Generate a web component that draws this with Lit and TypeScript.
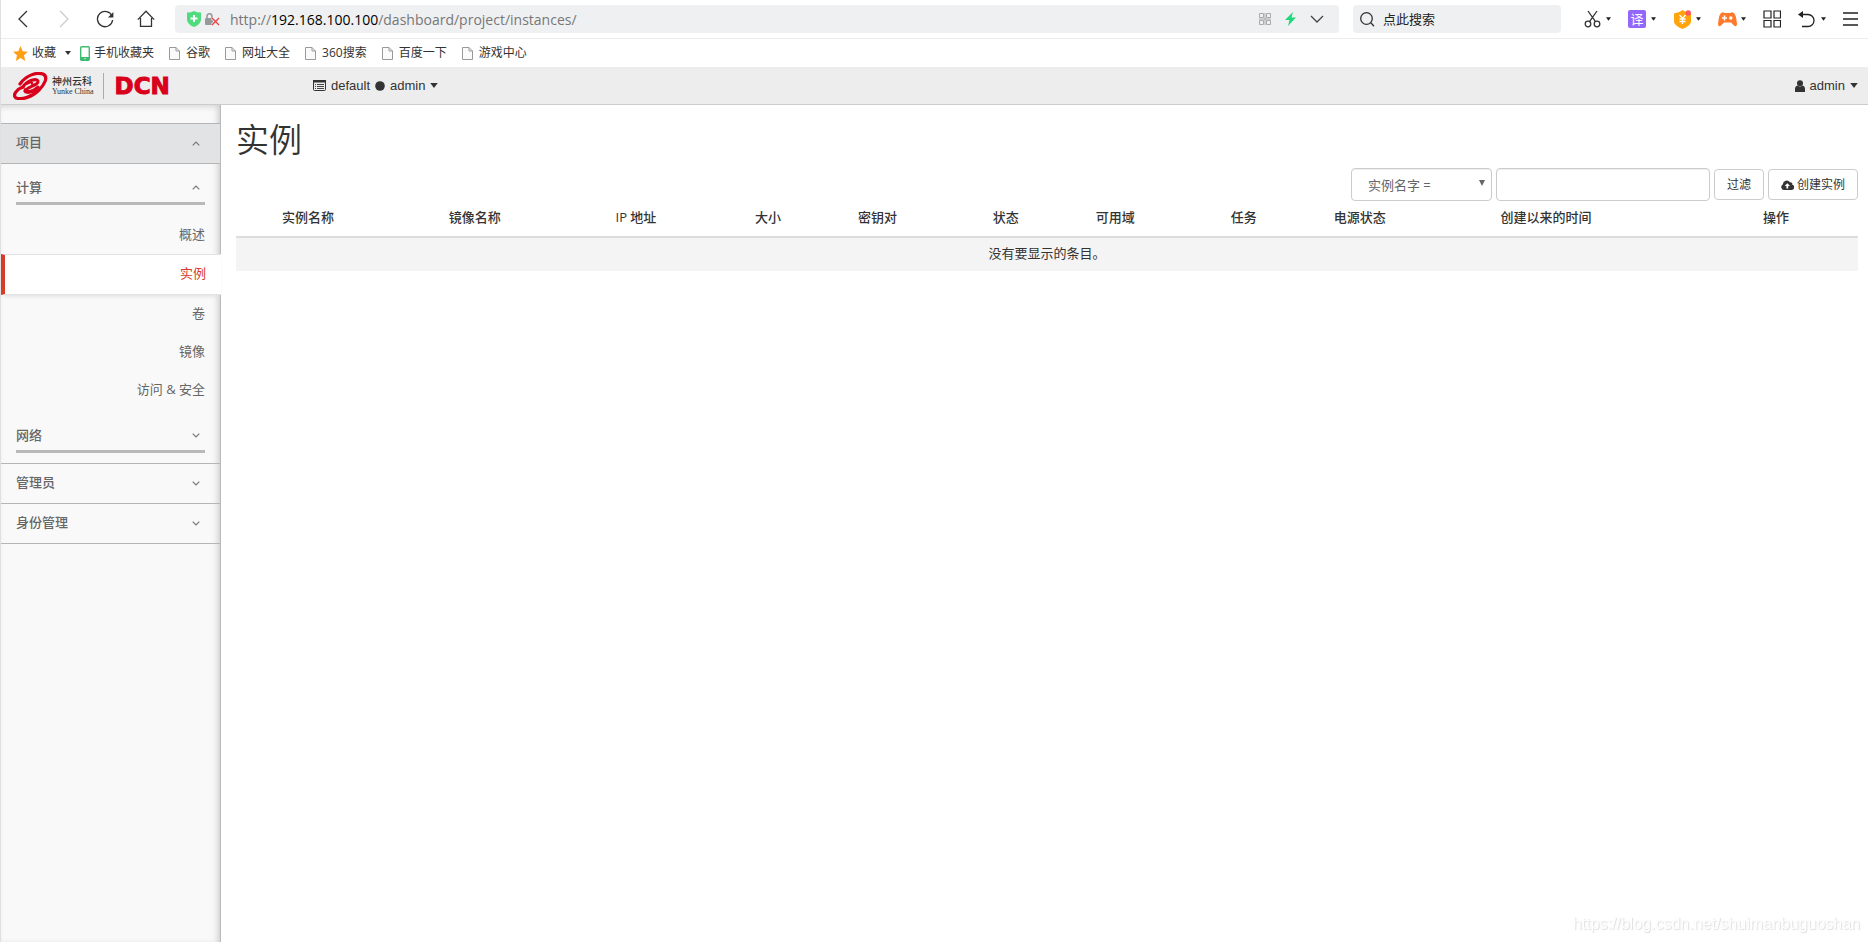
import { LitElement, html, css, svg, nothing } from "lit";
import { customElement, property } from "lit/decorators.js";

const icon = (w: number, h: number, body: unknown, box = `0 0 ${w} ${h}`) =>
  html`<svg class="icon" width=${w} height=${h} viewBox=${box} fill="none" aria-hidden="true">${body}</svg>`;

const caret = (w = 6, h = 4) => icon(w, h, svg`<path d="M0 0H6L3 4Z" fill="currentColor"/>`, "0 0 6 4");

const glyphs = {
  back: icon(18, 18, svg`<path d="M13 1L5 9L13 17" stroke="#333" stroke-width="1.3"/>`),
  forward: icon(18, 18, svg`<path d="M5 1L13 9L5 17" stroke="#ccc" stroke-width="1.3"/>`),
  reload: icon(18, 18, svg`<path d="M16 6A7.6 7.6 0 1 0 16.6 10" stroke="#333" stroke-width="1.3"/><path d="M17.4 2V7.4H12Z" fill="#333"/>`),
  home: icon(18, 18, svg`<path d="M.8 9.6L9 1.2L17.2 9.6M3.5 8V16.4H14.5V8" stroke="#333" stroke-width="1.3"/>`),
  shield: icon(14, 16, svg`<path d="M0 1.5Q4 1.6 7 0Q10 1.6 14 1.5V9Q13.4 13.5 7 16Q.6 13.5 0 9Z" fill="#4fdc7c"/><path d="M7 4V11M3.5 7.5H10.5" stroke="#fff" stroke-width="2"/>`),
  lock: icon(15, 13, svg`<rect x="0" y="5" width="8" height="7" rx="1" fill="#999"/><path d="M2 5V3.5A2.5 2.5 0 0 1 7 3V5" stroke="#999" stroke-width="1.6"/><path d="M7 5L14 12M14 5L7 12" stroke="#eff0f2" stroke-width="3"/><path d="M7 5L14 12M14 5L7 12" stroke="#e3464b" stroke-width="1.4"/>`),
  qr: icon(12, 12, svg`<path d="M.5.5H4.5V4.500H.5ZM7.500.5H11.500V4.500H7.500ZM.5 7.500H4.500V11.500H.5ZM7.500 7.500H11.500V11.500H7.500ZM0 6H12M6 0V12" stroke="#aaa"/>`),
  bolt: icon(11, 14, svg`<path d="M8 0L0 8H4.5L3 14L11 5.500H6.500Z" fill="#1fd67a"/>`),
  chevron: icon(14, 8, svg`<path d="M1 1L7 7L13 1" stroke="#444" stroke-width="1.3"/>`),
  search: icon(15, 15, svg`<circle cx="6.5" cy="6.5" r="5.8" stroke="#333" stroke-width="1.3"/><path d="M10.800 10.800L14 14.300" stroke="#333" stroke-width="1.3"/>`),
  scissors: icon(17, 18, svg`<g stroke="#333" stroke-width="1.3"><circle cx="4" cy="14" r="2.8"/><circle cx="13" cy="14" r="2.8"/><path d="M4 1L11.500 11.700M13 1L5.500 11.700"/></g>`),
  coin: icon(17, 19, svg`<path d="M0 3.500Q5 3 8.500 0Q12 3 17 3.500V12Q16 16 8.500 19Q1 16 0 12Z" fill="#ffa40b"/><path d="M5.500 5L8.500 8.500L11.500 5M8.500 8.500V14M5.500 9H11.500M5.500 11.500H11.500" stroke="#fff" stroke-width="1.3"/><circle cx="14.2" cy="3" r="2.8" fill="#ff5c60"/>`),
  pad: icon(19, 15, svg`<path d="M4 .5Q5.500 0 6.500 1H12.500Q13.500 0 15 .5Q18 1 19 12Q18.700 15 16.500 14L13 10.500H6L2.500 14Q.3 15 0 12Q1 1 4 .5Z" fill="#ff7a2c"/><path d="M6.500 3.500V8.500M4 6H9" stroke="#fff" stroke-width="1.4"/><circle cx="12.8" cy="6" r="1.7" fill="#fff"/>`),
  grid: icon(18, 18, svg`<path d="M1 1H8V8H1ZM11 1H17.500V8H11ZM1 10.500H8V17H1ZM11 10.500H17.500V17H11Z" stroke="#222" stroke-width="1.2"/>`),
  undo: icon(18, 18, svg`<path d="M2 4.500H10A6 6 0 0 1 10 16.500H4" stroke="#222" stroke-width="1.3"/><path d="M0 4.500L5 1V8Z" fill="#222"/>`),
  menu: icon(15, 14, svg`<path d="M0 1H15M0 7H15M0 13H15" stroke="#222" stroke-width="1.3"/>`),
  star: icon(15, 15, svg`<path d="M7.500 0L9.700 5.200L15 5.700L11 9.300L12.200 15L7.500 12L2.800 15L4 9.300L0 5.700L5.300 5.200Z" fill="#ff9f13"/>`),
  phone: icon(10, 15, svg`<rect x=".7" y=".7" width="8.600" height="13.600" rx="1" stroke="#3dbb6e" stroke-width="1.4"/><path d="M1 11H9V14H1Z" fill="#3dbb6e"/><circle cx="5" cy="12.600" r=".7" fill="#fff"/>`),
  page: icon(11, 13, svg`<path d="M.5.5H7L10.500 4V12.500H.5ZM7 .5V4H10.500" fill="#fafafa" stroke="#999"/>`),
  list: icon(13, 11, svg`<rect x=".5" y=".5" width="12" height="10" rx="1" stroke="#333"/><path d="M0 0H13V2.500H0Z" fill="#333"/><path d="M2 4.500H3M2 6.500H3M2 8.500H3M4 4.500H11M4 6.500H11M4 8.500H11" stroke="#333" stroke-width=".9"/>`),
  dot: icon(10, 10, svg`<circle cx="5" cy="5" r="4.8" fill="#333"/>`),
  user: icon(10, 12, svg`<circle cx="5" cy="3.200" r="3" fill="#333"/><path d="M0 12V9Q0 6 2.500 5.500Q5 7.500 7.500 5.500Q10 6 10 9V12Z" fill="#333"/>`),
  up: icon(8, 5, svg`<path d="M.7 4.300L4 1L7.300 4.300" stroke="#777" stroke-width="1.2"/>`),
  down: icon(8, 5, svg`<path d="M.7.7L4 4L7.300.7" stroke="#777" stroke-width="1.2"/>`),
  select: icon(6, 10, svg`<path d="M0 0H6L3 6Z" fill="#666"/>`),
  cloud: icon(13, 10, svg`<path d="M3 10A3 3 0 0 1 1.800 4.400A4 4 0 0 1 9 2.200A2 2 0 0 1 11.300 4.700A2.700 2.700 0 0 1 10.500 10Z" fill="#333"/><path d="M6.300 3.200L3.600 6H5.400V8.400H7.200V6H9Z" fill="#fff"/>`),
  swirl: icon(35, 28, svg`<g stroke="#d8001b" stroke-linecap="round" fill="none"><path d="M7 12C13 3 24 0 30 2C36 5 31 13 26 18C19 25 9 28 3 26C-1 23 4 17 10 15" stroke-width="3.2"/><path d="M10 15C14 8 24 6 25 9C26 13 17 14 14 17C11 21 20 20 25 15" stroke-width="3"/><path d="M14 12C17 10 20 10 19 12M12 17C9 22 18 22 23 18" stroke-width="2"/></g>`),
};

const shared = css`
  :host, * { box-sizing: border-box; }
  .icon { display: block; flex: none; }
  button, input, select { font: inherit; color: inherit; margin: 0; }
  button { display: flex; align-items: center; padding: 0; border: 0; background: none; }
  a { color: inherit; text-decoration: none; }
  ul { list-style: none; margin: 0; padding: 0; }
`;

@customElement("browser-chrome")
export class BrowserChrome extends LitElement {
  static styles = [shared, css`
    :host { display: block; background: #fff; color: #333; font-family: "Open Sans", "Noto Sans CJK SC", sans-serif; }
    .bar { display: flex; align-items: center; height: 39px; padding: 0 10px 0 13px; border-bottom: 1px solid #ececec; }
    .nav { display: flex; gap: 23px; margin-right: 20px; }
    .field { display: flex; align-items: center; height: 28px; border-radius: 4px; background: #eff0f2; }
    .address { flex: 1; padding: 0 15px 0 12px; margin-right: 14px; font-size: 14px; color: #777; }
    .address b { font-weight: 400; color: #000; }
    .marks { display: flex; align-items: center; gap: 4px; margin-right: 10px; }
    .url { flex: 1; }
    .extras { display: flex; align-items: center; gap: 14px; }
    .search { width: 208px; padding: 0 7px; gap: 8px; margin-right: 22px; }
    .search input { flex: 1; min-width: 0; border: 0; padding: 0; background: none; font-size: 13px; }
    .search input::placeholder { color: #222; }
    .tools { display: flex; align-items: center; gap: 17px; }
    .tool { gap: 5px; color: #222; }
    .tool .box { display: flex; width: 18px; justify-content: center; }
    .translate { width: 18px; height: 18px; border-radius: 2px; background: #9467fb; color: #fff; font-size: 13px; line-height: 18px; text-align: center; }
    .bookmarks { display: flex; align-items: center; height: 28px; padding: 0 12px; gap: 15px; font-size: 12px; line-height: 18px; }
    .bookmarks a { display: flex; align-items: center; gap: 6px; }
    .favourites { display: flex; align-items: center; gap: 9px; }
    .favourites a, .favourites button { gap: 4px; }
  `];

  private tool(label: string, glyph: unknown, menu = true) {
    return html`<button class="tool" aria-label=${label}><span class="box">${glyph}</span>${menu ? caret(5, 4) : nothing}</button>`;
  }

  render() {
    const pages = ["谷歌", "网址大全", "360搜索", "百度一下", "游戏中心"];
    return html`
      <div class="bar">
        <nav class="nav">
          <button aria-label="后退">${glyphs.back}</button>
          <button aria-label="前进">${glyphs.forward}</button>
          <button aria-label="刷新">${glyphs.reload}</button>
          <button aria-label="主页">${glyphs.home}</button>
        </nav>
        <div class="field address">
          <span class="marks">${glyphs.shield}${glyphs.lock}</span>
          <span class="url">http://<b>192.168.100.100</b>/dashboard/project/instances/</span>
          <span class="extras">${glyphs.qr}${glyphs.bolt}${glyphs.chevron}</span>
        </div>
        <label class="field search">${glyphs.search}<input type="text" aria-label="搜索" placeholder="点此搜索"></label>
        <div class="tools">
          ${this.tool("截图", glyphs.scissors)}
          ${this.tool("翻译", html`<span class="translate">译</span>`)}
          ${this.tool("钱包", glyphs.coin)}
          ${this.tool("游戏", glyphs.pad)}
          ${this.tool("扩展", glyphs.grid, false)}
          ${this.tool("恢复", glyphs.undo)}
          <button aria-label="菜单">${glyphs.menu}</button>
        </div>
      </div>
      <div class="bookmarks">
        <div class="favourites">
          <button>${glyphs.star}收藏</button>
          <button aria-label="更多收藏">${caret()}</button>
          <a href="#">${glyphs.phone}手机收藏夹</a>
        </div>
        ${pages.map((name) => html`<a href="#">${glyphs.page}${name}</a>`)}
      </div>`;
  }
}

@customElement("top-bar")
export class TopBar extends LitElement {
  static styles = [shared, css`
    :host { display: flex; align-items: center; height: 38px; padding: 0 10px 0 12px; border-bottom: 1px solid #ccc; background: #ededed; color: #333; font: 13px "Liberation Sans", "Noto Sans CJK SC", sans-serif; }
    .brand { display: flex; align-items: center; width: 300px; }
    .name { display: flex; flex-direction: column; margin: 0 9px 0 4px; font: 500 10px/12px "Noto Sans CJK SC", sans-serif; }
    .latin { font: 8px/9px "Liberation Serif", serif; }
    .dcn { padding-left: 11px; border-left: 1px solid #aaa; color: #d8001b; font: bold 23px/26px "DejaVu Sans", sans-serif; -webkit-text-stroke: 1px #d8001b; }
    .menu { gap: 5px; }
    .account { margin-left: auto; }
  `];

  render() {
    return html`
      <a class="brand" href="#">
        ${glyphs.swirl}
        <span class="name">神州云科<span class="latin">Yunke China</span></span>
        <span class="dcn">DCN</span>
      </a>
      <button class="menu">${glyphs.list}<span>default</span>${glyphs.dot}<span>admin</span>${caret(8, 5)}</button>
      <button class="menu account">${glyphs.user}<span>admin</span>${caret(8, 5)}</button>`;
  }
}

@customElement("side-nav")
export class SideNav extends LitElement {
  @property() current = "实例";

  static styles = [shared, css`
    :host { display: block; padding-top: 18px; border-right: 1px solid #bbb; background: #f9f9f9; box-shadow: inset -5px 0 6px -3px #ccc, inset 0 5px 6px -3px #ddd; color: #666; font: 13px/20px "Open Sans", "Noto Sans CJK SC", sans-serif; }
    button { width: 100%; justify-content: space-between; font-weight: 500; }
    .panel { height: 40px; padding: 0 20px 0 15px; border-bottom: 1px solid #b5b5b5; }
    .panel span { padding-bottom: 4px; }
    .open { height: 41px; border-top: 1px solid #b5b5b5; background: #e1e3e5; }
    .groups { border-bottom: 1px solid #b5b5b5; padding-bottom: 10px; }
    .group { padding: 0 15px; }
    .group button { height: 41px; padding: 8px 5px 0 0; border-bottom: 3px solid #b9b9b9; }
    .items { padding: 11px 0 3px; }
    .items a { display: block; height: 38px; padding: 0 15px; line-height: 37px; text-align: right; }
    .items a.active { height: 41px; margin-right: -1px; border: solid #e3e3e3; border-width: 1px 0; border-left: 4px solid #d93b29; background: #fff; box-shadow: 0 3px 4px -2px #ddd; color: #d93b29; }
  `];

  render() {
    const items = ["概述", "实例", "卷", "镜像", "访问 & 安全"];
    return html`
      <nav>
        <button class="panel open" aria-expanded="true"><span>项目</span>${glyphs.up}</button>
        <div class="groups">
          <div class="group"><button aria-expanded="true"><span>计算</span>${glyphs.up}</button></div>
          <ul class="items">
            ${items.map((name) => html`<li><a href="#" class=${name === this.current ? "active" : ""}>${name}</a></li>`)}
          </ul>
          <div class="group"><button aria-expanded="false"><span>网络</span>${glyphs.down}</button></div>
        </div>
        <button class="panel" aria-expanded="false"><span>管理员</span>${glyphs.down}</button>
        <button class="panel" aria-expanded="false"><span>身份管理</span>${glyphs.down}</button>
      </nav>`;
  }
}

@customElement("instance-list")
export class InstanceList extends LitElement {
  static styles = [shared, css`
    :host { display: block; padding: 15px 10px 20px 15px; color: #333; font: 13px/18px "Open Sans", "Noto Sans CJK SC", sans-serif; }
    h1 { margin: 0 0 8px; font-size: 33px; line-height: 40px; font-weight: 350; }
    .filters { display: flex; justify-content: flex-end; align-items: center; gap: 4px; }
    .pick { display: grid; align-items: center; color: #666; }
    .pick > * { grid-area: 1 / 1; }
    .pick .icon { justify-self: end; margin-right: 7px; pointer-events: none; }
    select, input { height: 33px; border: 1px solid #ccc; border-radius: 4px; background: #fff; box-shadow: inset 0 1px 1px #eee; }
    select { width: 141px; padding: 0 16px; appearance: none; }
    input { width: 214px; padding: 0 12px; }
    .action { height: 31px; padding: 0 12px; gap: 3px; border: 1px solid #ccc; border-radius: 4px; background: #fff; font-size: 12px; }
    table { width: 100%; border-collapse: collapse; }
    th { height: 36px; padding: 0 8px 4px; border-bottom: 2px solid #ddd; font-weight: 500; text-align: left; white-space: nowrap; }
    th.lead { width: 38px; padding: 0; }
    td { height: 34px; padding: 0 8px 4px; background: #f4f4f4; text-align: center; }
  `];

  render() {
    const columns = ["实例名称", "镜像名称", "IP 地址", "大小", "密钥对", "状态", "可用域", "任务", "电源状态", "创建以来的时间", "操作"];
    return html`
      <h1>实例</h1>
      <form class="filters">
        <label class="pick">
          <select aria-label="过滤条件"><option>实例名字 =</option></select>
          ${glyphs.select}
        </label>
        <input type="text" aria-label="过滤内容">
        <button class="action" type="button">过滤</button>
        <button class="action" type="button">${glyphs.cloud}创建实例</button>
      </form>
      <table>
        <thead><tr><th class="lead"></th>${columns.map((name) => html`<th scope="col">${name}</th>`)}</tr></thead>
        <tbody><tr><td colspan=${columns.length + 1}>没有要显示的条目。</td></tr></tbody>
      </table>`;
  }
}

@customElement("app-root")
export class AppRoot extends LitElement {
  static styles = css`
    :host { display: flex; flex-direction: column; box-sizing: border-box; min-height: 100vh; border-left: 1px solid #e0e0e0; background: #fff; }
    .body { flex: 1; display: grid; grid-template-columns: 220px minmax(0, 1fr); }
    .watermark { position: fixed; right: 8px; bottom: 8px; color: #fff; font: 16px/20px "Liberation Sans", sans-serif; text-shadow: 1px 1px 1px #ddd, 0 0 1px #eee; }
  `;

  render() {
    return html`
      <browser-chrome></browser-chrome>
      <top-bar></top-bar>
      <div class="body">
        <side-nav></side-nav>
        <instance-list></instance-list>
      </div>
      <span class="watermark">https://blog.csdn.net/shuimanbuguoshan</span>`;
  }
}
